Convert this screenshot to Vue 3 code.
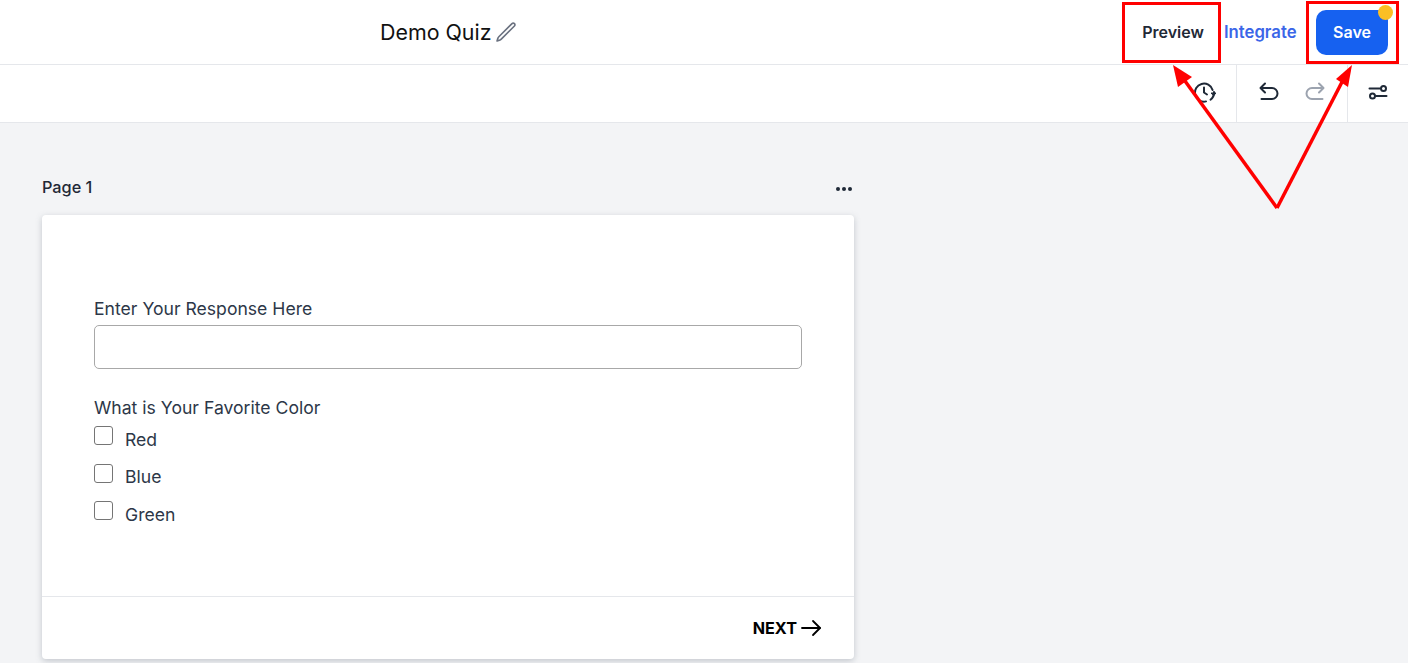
<script setup>
const options = ["Red", "Blue", "Green"];
</script>

<template>
  <div class="page">
    <header class="topbar">
      <div class="title">
        <span>Demo Quiz</span>
        <svg class="pencil" width="22" height="22" viewBox="0 0 24 24" fill="none" stroke="#6b7280" stroke-width="1.8" stroke-linejoin="round">
          <path d="M16.862 4.487l1.687-1.688a1.875 1.875 0 1 1 2.652 2.652L6.832 19.820a4.500 4.500 0 0 1-1.897 1.130l-2.685.8.8-2.685a4.500 4.500 0 0 1 1.130-1.897L16.863 4.487z" />
        </svg>
      </div>
      <div class="actions">
        <button class="preview">Preview</button>
        <button class="integrate">Integrate</button>
        <button class="save">Save<span class="dot"></span></button>
      </div>
    </header>

    <div class="toolbar">
      <div class="tool-group history">
        <svg width="24" height="24" viewBox="-1 1.500 24 24" fill="none" stroke="#1f2937" stroke-width="2" stroke-linecap="round" stroke-linejoin="round">
          <path d="M19.600 9.500A9 9 0 1 0 13 20.900" />
          <path d="M11 7v5l3 2" />
          <path d="M21 11.500a9 9 0 0 1-3.500 7.700" />
          <path d="M18.500 12.500h4.500l-2.200 2.500z" fill="#1f2937" stroke-width="1" />
        </svg>
      </div>
      <div class="tool-group undo-redo">
        <svg width="24" height="24" viewBox="0 0 24 24" fill="none" stroke="#1f2937" stroke-width="2" stroke-linecap="round" stroke-linejoin="round">
          <path d="M8 1.500L3.500 6 8 10.500" />
          <path d="M4 6h11a5.500 5.500 0 0 1 0 11H4.500" />
        </svg>
        <svg width="24" height="24" viewBox="0 0 24 24" fill="none" stroke="#9ca3af" stroke-width="2" stroke-linecap="round" stroke-linejoin="round">
          <path d="M16 1.500L20.500 6 16 10.500" />
          <path d="M20 6H9a5.500 5.500 0 0 0 0 11h10.500" />
        </svg>
      </div>
      <div class="tool-group settings">
        <svg width="20" height="20" viewBox="0 0 20 20" fill="none" stroke="#1f2937" stroke-width="2" stroke-linecap="round">
          <path d="M1.500 4.500h10.500" />
          <circle cx="15.500" cy="4.500" r="2.500" />
          <path d="M8 12h10.500" />
          <circle cx="4.500" cy="12" r="2.500" />
        </svg>
      </div>
    </div>

    <main class="canvas">
      <div class="page-head">
        <span class="page-name">Page 1</span>
        <span class="dots"><i></i><i></i><i></i></span>
      </div>
      <section class="card">
        <div class="card-body">
          <label class="field-label">Enter Your Response Here</label>
          <input class="text-input" type="text" />
          <div class="group-label">What is Your Favorite Color</div>
          <div class="option" v-for="opt in options" :key="opt">
            <span class="box"></span>
            <span class="option-text">{{ opt }}</span>
          </div>
        </div>
        <div class="card-foot">
          <span class="next">NEXT</span>
          <svg width="22" height="18" viewBox="0 0 22 18" fill="none" stroke="#000" stroke-width="1.800" stroke-linecap="round" stroke-linejoin="round">
            <path d="M2 9h18" />
            <path d="M13 2l7 7-7 7" />
          </svg>
        </div>
      </section>
    </main>

    <!-- annotations drawn over the screenshot -->
    <svg class="marks" width="1408" height="663" viewBox="0 0 1408 663" fill="none">
      <rect x="1123.500" y="3.500" width="96" height="58" stroke="#f00" stroke-width="3" />
      <rect x="1307.500" y="2.500" width="90" height="60" stroke="#f00" stroke-width="3" />
      <path d="M1277 208L1185 81" stroke="#f00" stroke-width="3.500" />
      <path d="M1277 208L1342 82" stroke="#f00" stroke-width="3.500" />
      <path d="M1173 65L1192 77L1178 87z" fill="#f00" />
      <path d="M1352 65L1348 87L1336 79z" fill="#f00" />
    </svg>
  </div>
</template>

<style>
html,
body {
  margin: 0;
  background: #f3f4f6;
}
</style>

<style scoped>
.page {
  position: relative;
  height: 663px;
  overflow: hidden;
  background: #f3f4f6;
  font-family: Inter, "Liberation Sans", sans-serif;
  color: #1f2937;
}
.topbar {
  height: 64px;
  background: #fff;
  border-bottom: 1px solid #e5e7eb;
  display: flex;
  align-items: center;
  justify-content: space-between;
  padding-left: 380px;
  padding-right: 20px;
}
.title {
  display: flex;
  align-items: center;
  gap: 3px;
  font-size: 21.400px;
  color: #111;
}
.actions {
  display: flex;
  align-items: center;
}
button {
  font-family: inherit;
  font-weight: 600;
  font-size: 16px;
  border: 0;
  background: none;
  padding: 0;
}
.preview {
  width: 100px;
  padding-left: 2px;
  color: #1f2937;
}
.integrate {
  color: #3b66e8;
  font-size: 16.700px;
  width: 74px;
  margin-left: 2px;
  text-align: left;
}
.save {
  position: relative;
  width: 72px;
  height: 45px;
  margin-left: 18px;
  border-radius: 10px;
  background: #1661f0;
  color: #fff;
}
.dot {
  position: absolute;
  top: -5px;
  right: -5px;
  width: 15px;
  height: 15px;
  border-radius: 50%;
  background: #fbbf24;
}
.toolbar {
  height: 57px;
  background: #fff;
  border-bottom: 1px solid #e5e7eb;
  display: flex;
  justify-content: flex-end;
}
.tool-group {
  display: flex;
  align-items: center;
}
.history {
  padding-right: 20px;
  border-right: 1px solid #e5e7eb;
}
.undo-redo {
  width: 111px;
  box-sizing: border-box;
  justify-content: center;
  gap: 22px;
  border-right: 1px solid #e5e7eb;
}
.settings {
  width: 60px;
  box-sizing: border-box;
  justify-content: center;
}
.canvas {
  width: 812px;
  margin-left: 42px;
}
.page-head {
  height: 92px;
  box-sizing: border-box;
  padding-top: 54px;
  display: flex;
  justify-content: space-between;
  align-items: flex-start;
}
.page-name {
  font-size: 16.300px;
  font-weight: 500;
  line-height: 20px;
  color: #1f2937;
}
.dots {
  display: flex;
  gap: 2px;
  margin-top: 10px;
  margin-right: 2px;
}
.dots i {
  width: 4px;
  height: 4px;
  border-radius: 50%;
  background: #1f2937;
}
.card {
  height: 444px;
  background: #fff;
  border-radius: 4px;
  box-shadow: 0 2px 6px rgba(107, 114, 128, 0.35);
  display: flex;
  flex-direction: column;
}
.card-body {
  flex: 1;
  padding: 84px 52px 0;
}
.field-label,
.group-label {
  display: block;
  font-size: 17.600px;
  line-height: 20px;
  color: #2d3748;
}
.text-input {
  display: block;
  width: 100%;
  height: 44px;
  box-sizing: border-box;
  margin-top: 6px;
  border: 1px solid #a8a8a8;
  border-radius: 5px;
  background: #fff;
}
.group-label {
  margin-top: 29px;
  margin-bottom: 2px;
}
.option {
  display: flex;
  align-items: center;
  height: 37.500px;
}
.box {
  width: 17px;
  height: 17px;
  border: 1px solid #757575;
  border-radius: 3px;
  margin-top: -6px;
}
.option-text {
  margin-left: 12px;
  font-size: 17.600px;
  color: #2d3748;
  padding-top: 1px;
}
.card-foot {
  height: 62px;
  border-top: 1px solid #e5e7eb;
  display: flex;
  align-items: center;
  justify-content: flex-end;
  gap: 3px;
  padding-right: 32px;
}
.next {
  font-size: 16.200px;
  font-weight: 700;
  color: #000;
}
.marks {
  position: absolute;
  top: 0;
  left: 0;
  pointer-events: none;
}
</style>
